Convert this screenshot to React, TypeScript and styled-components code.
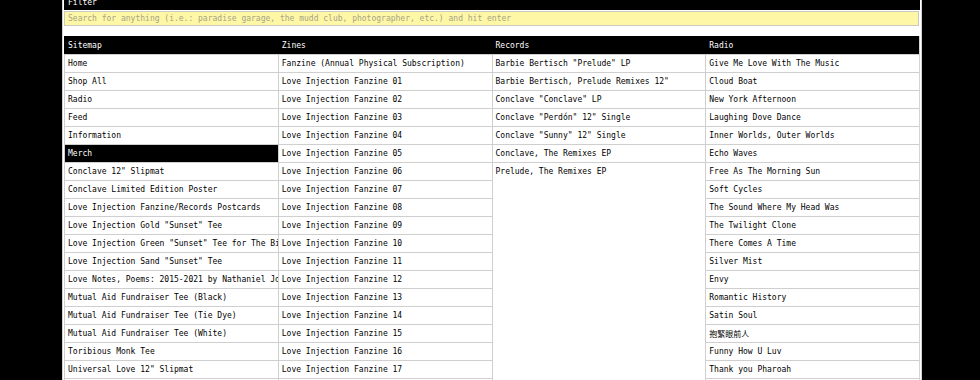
import React from "react";
import styled, { createGlobalStyle } from "styled-components";

const Global = createGlobalStyle`
  html, body { margin: 0; padding: 0; background: #000; }
  body { font-family: "DejaVu Sans Mono", "Noto Sans CJK TC", monospace; font-size: 8px; overflow: hidden; }
  * { box-sizing: border-box; }
`;

const Page = styled.div`
  padding-left: 62px;
  height: 380px;
  overflow: hidden;
`;

const Panel = styled.div`
  width: 860px;
  background: #fff;
  border-left: 1px solid #d4d4d4;
  border-right: 1px solid #d4d4d4;
  padding: 0 1px;
  margin-top: -8px;
  min-height: 420px;
`;

const FilterBar = styled.div`
  height: 18px;
  background: #000;
  color: #fff;
  padding: 6px 4px 0;
  line-height: 10px;
`;

const Search = styled.input`
  display: block;
  margin-top: 1px;
  width: 855px;
  height: 15px;
  background: #fdf7a6;
  border: 1px solid #c9c9c0;
  padding: 0 3px;
  font: inherit;
  color: #111;
  outline: none;
  &::placeholder { color: #a8a487; }
`;

const Table = styled.div`
  margin-top: 10px;
  width: 856px;
  border-right: 1px solid #d4d4d4;
`;

const HeadRow = styled.div`
  display: grid;
  grid-template-columns: repeat(4, 1fr);
  height: 18px;
  background: #000;
  color: #fff;
`;

const HeadCell = styled.div`
  display: flex;
  align-items: center;
  padding: 0 4px;
`;

const Body = styled.div`
  display: grid;
  grid-template-columns: repeat(4, 1fr);
`;

const Column = styled.div`
  border-left: 1px solid #cfcfcf;
  min-width: 0;
  min-height: 400px;
`;

const Row = styled.div<{ $active?: boolean }>`
  height: 18px;
  border-top: 1px solid #cfcfcf;
  padding: 0 3px;
  display: flex;
  align-items: center;
  white-space: nowrap;
  overflow: hidden;
  background: ${(p) => (p.$active ? "#000" : "transparent")};
  color: ${(p) => (p.$active ? "#fff" : "#000")};
`;

const sitemap = [
  "Home",
  "Shop All",
  "Radio",
  "Feed",
  "Information",
  "Merch",
  'Conclave 12" Slipmat',
  "Conclave Limited Edition Poster",
  "Love Injection Fanzine/Records Postcards",
  'Love Injection Gold "Sunset" Tee',
  'Love Injection Green "Sunset" Tee for The Birds',
  'Love Injection Sand "Sunset" Tee',
  "Love Notes, Poems: 2015-2021 by Nathaniel Jones",
  "Mutual Aid Fundraiser Tee (Black)",
  "Mutual Aid Fundraiser Tee (Tie Dye)",
  "Mutual Aid Fundraiser Tee (White)",
  "Toribious Monk Tee",
  'Universal Love 12" Slipmat',
  "Wax Poetics Tee",
];

const zines = [
  "Fanzine (Annual Physical Subscription)",
  ...Array.from({ length: 18 }, (_, i) => `Love Injection Fanzine ${String(i + 1).padStart(2, "0")}`),
];

const records = [
  'Barbie Bertisch "Prelude" LP',
  'Barbie Bertisch, Prelude Remixes 12"',
  'Conclave "Conclave" LP',
  'Conclave "Perdón" 12" Single',
  'Conclave "Sunny" 12" Single',
  "Conclave, The Remixes EP",
  "Prelude, The Remixes EP",
];

const radio = [
  "Give Me Love With The Music",
  "Cloud Boat",
  "New York Afternoon",
  "Laughing Dove Dance",
  "Inner Worlds, Outer Worlds",
  "Echo Waves",
  "Free As The Morning Sun",
  "Soft Cycles",
  "The Sound Where My Head Was",
  "The Twilight Clone",
  "There Comes A Time",
  "Silver Mist",
  "Envy",
  "Romantic History",
  "Satin Soul",
  "抱緊眼前人",
  "Funny How U Luv",
  "Thank you Pharoah",
  "Sunday Morning",
];

const columns = [
  { title: "Sitemap", items: sitemap },
  { title: "Zines", items: zines },
  { title: "Records", items: records },
  { title: "Radio", items: radio },
];

export default function App() {
  return (
    <>
      <Global />
      <Page>
        <Panel>
          <FilterBar>Filter</FilterBar>
          <Search placeholder="Search for anything (i.e.: paradise garage, the mudd club, photographer, etc.) and hit enter" />
          <Table>
            <HeadRow>
              {columns.map((c) => (
                <HeadCell key={c.title}>{c.title}</HeadCell>
              ))}
            </HeadRow>
            <Body>
              {columns.map((c) => (
                <Column key={c.title}>
                  {c.items.map((it) => (
                    <Row key={it} $active={it === "Merch"}>
                      {it}
                    </Row>
                  ))}
                </Column>
              ))}
            </Body>
          </Table>
        </Panel>
      </Page>
    </>
  );
}
